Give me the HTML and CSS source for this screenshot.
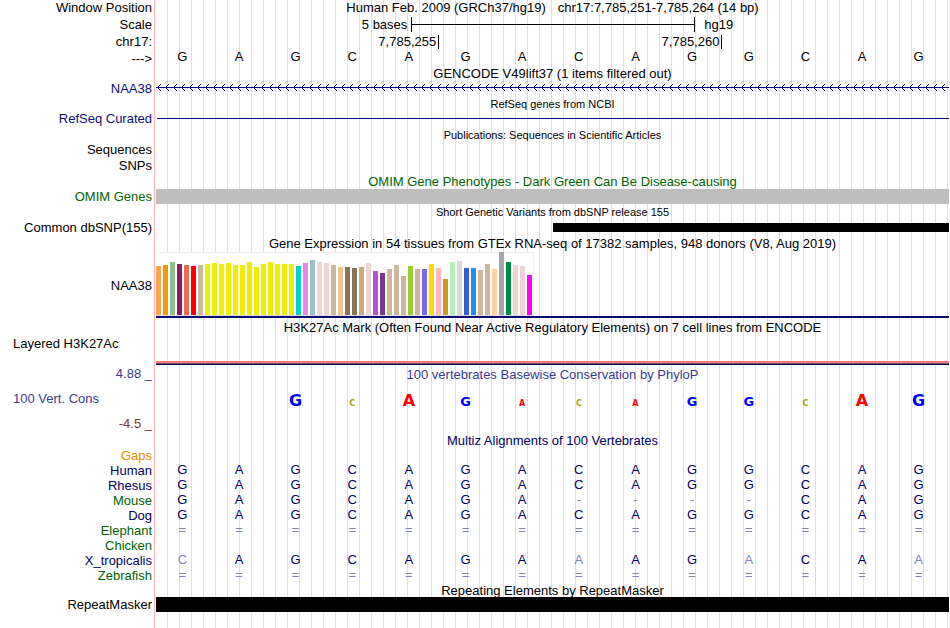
FILE: index.html
```html
<!DOCTYPE html>
<html lang="en">
<head>
    <meta charset="utf-8">
    <title>Human chr17:7,785,251-7,785,264 Genome Browser</title>
    <link rel="stylesheet" href="styles.css">
</head>
<body>
    <main class="browser">
        <div class="track">
            <div class="label">Window Position</div>
            <div class="title position"><span>Human Feb. 2009 (GRCh37/hg19)</span><span>chr17:7,785,251-7,785,264 (14 bp)</span></div>
        </div>
        <div class="track scale-track">
            <div class="label">Scale</div>
            <div class="scale">
                <span class="scale-size">5 bases</span>
                <span class="scale-bar"></span>
                <span class="scale-db">hg19</span>
            </div>
        </div>
        <div class="track">
            <div class="label">chr17:</div>
            <div class="ruler">
                <span class="tick">7,785,255</span>
                <span class="tick">7,785,260</span>
            </div>
        </div>
        <div class="track">
            <div class="label strand">---&gt;</div>
            <div class="bases" data-bases="GAGCAGACAGGCAG"></div>
        </div>

        <div class="title track-title">GENCODE V49lift37 (1 items filtered out)</div>
        <div class="track compact">
            <div class="label navy">NAA38</div>
            <svg class="gene" height="15">
                <defs>
                    <pattern id="arrows" width="8" height="15" patternUnits="userSpaceOnUse">
                        <path d="M4 3h1v1h-1zM3 4h1v1h-1zM2 5h1v1h-1zM1 6h1v1h-1zM2 7h1v1h-1zM3 8h1v1h-1zM4 9h1v1h-1z" fill="#0c0c78" />
                    </pattern>
                </defs>
                <rect width="100%" height="15" fill="url(#arrows)" />
                <rect y="6" width="100%" height="1" fill="#0c0c78" />
            </svg>
        </div>

        <div class="title track-title small">RefSeq genes from NCBI</div>
        <div class="track">
            <div class="label navy">RefSeq Curated</div>
            <div class="refseq"></div>
        </div>

        <div class="title track-title small">Publications: Sequences in Scientific Articles</div>
        <div class="track"><div class="label">Sequences</div></div>
        <div class="track"><div class="label">SNPs</div></div>

        <div class="title track-title green">OMIM Gene Phenotypes - Dark Green Can Be Disease-causing</div>
        <div class="track compact">
            <div class="label green">OMIM Genes</div>
            <div class="block omim"></div>
        </div>

        <div class="title track-title small variant-title">Short Genetic Variants from dbSNP release 155</div>
        <div class="track variant-track">
            <div class="label">Common dbSNP(155)</div>
            <div class="variant"></div>
        </div>

        <div class="title track-title tall">Gene Expression in 54 tissues from GTEx RNA-seq of 17382 samples, 948 donors (V8, Aug 2019)</div>
        <div class="track gtex-track">
            <div class="label">NAA38</div>
            <div class="gtex"><div class="bars" id="bars"></div></div>
        </div>

        <div class="title track-title roomy">H3K27Ac Mark (Often Found Near Active Regulatory Elements) on 7 cell lines from ENCODE</div>
        <div class="track histone-track">
            <div class="label left">Layered H3K27Ac</div>
            <div class="histone"></div>
        </div>

        <div class="track cons-track">
            <div class="cons-labels slate">
                <div class="label">4.88 _</div>
                <div class="label left">100 Vert. Cons</div>
                <div class="label maroon">-4.5 _</div>
            </div>
            <div class="cons">
                <div class="title slate">100 vertebrates Basewise Conservation by PhyloP</div>
                <div class="logo" id="logo"></div>
            </div>
        </div>

        <div class="title track-title dark">Multiz Alignments of 100 Vertebrates</div>
        <div class="track compact"><div class="label orange">Gaps</div></div>
        <div class="track compact">
            <div class="label dark">Human</div>
            <div class="bases dark" data-bases="GAGCAGACAGGCAG"></div>
        </div>
        <div class="track compact">
            <div class="label dark">Rhesus</div>
            <div class="bases dark" data-bases="GAGCAGACAGGCAG"></div>
        </div>
        <div class="track compact">
            <div class="label green">Mouse</div>
            <div class="bases dark" data-bases="GAGCAGA----CAG"></div>
        </div>
        <div class="track compact">
            <div class="label dark">Dog</div>
            <div class="bases dark" data-bases="GAGCAGACAGGCAG"></div>
        </div>
        <div class="track compact">
            <div class="label green">Elephant</div>
            <div class="bases dark" data-bases="=============="></div>
        </div>
        <div class="track compact"><div class="label green">Chicken</div></div>
        <div class="track compact">
            <div class="label dark">X_tropicalis</div>
            <!-- lower case marks a mismatch with human -->
            <div class="bases dark" data-bases="cAGCAGAaAGaCAa"></div>
        </div>
        <div class="track compact">
            <div class="label green">Zebrafish</div>
            <div class="bases dark" data-bases="=============="></div>
        </div>

        <div class="title track-title short">Repeating Elements by RepeatMasker</div>
        <div class="track compact">
            <div class="label">RepeatMasker</div>
            <div class="block repeat"></div>
        </div>
    </main>
    <script src="script.js"></script>
</body>
</html>
```
FILE: styles.css
```css
body {
    margin: 0;
    background: #ffffff;
    color: #000000;
    font-family: "Liberation Sans", Arial, Helvetica, sans-serif;
    font-size: 13px;
    line-height: 16px;
}
/* pink divider after the labels, then a guide line every 12px */
.browser {
    min-height: 100vh;
    margin-right: 1px;
    background-image:
        linear-gradient(#ffb4b4, #ffb4b4),
        repeating-linear-gradient(to right, transparent 0, transparent 11px, #dcdcf5 11px, #dcdcf5 12px);
    background-position: 154px 0, right top;
    background-size: 1px 100%, calc(100% - 156px) 100%;
    background-repeat: no-repeat;
}
.track {
    display: grid;
    grid-template-columns: 156px 1fr;
    min-height: 16px;
}
.compact {
    min-height: 15px;
    line-height: 15px;
}
.label {
    padding-right: 4px;
    text-align: right;
    white-space: nowrap;
}
.left {
    padding-left: 13px;
    text-align: left;
}
.title {
    text-align: center;
    white-space: nowrap;
}
.track-title {
    height: 15px;
    margin-left: 156px;
    line-height: 15px;
}
.small {
    font-size: 11px;
    line-height: 17px;
}
.tall, .variant-title {
    height: 16px;
}
.tall {
    line-height: 16px;
}
.roomy {
    line-height: 20px;
    height: 18px;
}
.short {
    height: 14px;
}
.navy {
    color: #0c0c78;
}
.dark {
    color: #000064;
}
.green {
    color: #006400;
}
.slate {
    color: #3c3c8c;
}
.maroon {
    color: #783232;
}
.orange {
    color: #e68c00;
}

/* position, scale and ruler */
.position {
    display: flex;
    justify-content: center;
    gap: 12px;
    line-height: 15px;
}
.scale-track {
    line-height: 18px;
}
.scale {
    display: grid;
    grid-template-columns: 32.2% 35.8% 1fr;
}
.scale-size {
    padding-right: 4px;
    text-align: right;
}
.scale-bar {
    height: 15px;
    margin-top: 1px;
    box-sizing: border-box;
    border: solid #000000;
    border-width: 0 1px;
    background: linear-gradient(#000000, #000000) center / 100% 1px no-repeat;
}
.scale-db {
    padding-left: 9px;
}
.ruler {
    display: grid;
    grid-template-columns: 5fr 5fr 4fr;
    align-items: center;
}
.tick {
    padding-right: 2px;
    border-right: 1px solid #000000;
    line-height: 14px;
    text-align: right;
}
.strand {
    height: 16px;
    line-height: 18px;
}
.bases, .logo {
    display: grid;
    grid-template-columns: repeat(14, 1fr);
    margin: 0 2px 0 -2px;
    text-align: center;
}
.bases {
    line-height: 14px;
}
.faded {
    color: #8282b4;
}

/* features */
.gene {
    width: 100%;
}
.refseq {
    height: 1px;
    margin: 7px 0 0 1px;
    background: #0c0c78;
}
.omim {
    background: #bebebe;
}
.repeat {
    background: #000000;
}
.variant {
    width: 50%;
    height: 9px;
    margin: 3px 0 0 auto;
    background: #000000;
}
.variant-track .label {
    line-height: 15px;
}

/* expression bars */
.gtex-track .label {
    height: 66px;
    line-height: 68px;
}
.gtex {
    border-bottom: 2px solid #0c0c78;
    line-height: 0;
}
.bars {
    display: inline-flex;
    align-items: flex-end;
    gap: 2px;
    height: 63px;
    padding-right: 1px;
    background: linear-gradient(#f0f0f0, #f0f0f0) top / 100% 1px no-repeat, #ffffff;
    border-right: 1px solid #f0f0f0;
    border-bottom: 1px solid #dcdcdc;
}
.bar {
    width: 5px;
}

/* histone mark */
.histone-track {
    min-height: 29px;
    line-height: 15px;
}
.histone {
    align-self: end;
    height: 2px;
    border-top: 2px solid #ff7878;
    background: linear-gradient(#785064 50%, #000050 50%);
}

/* conservation */
.cons-track {
    min-height: 68px;
}
.cons-labels {
    display: flex;
    flex-direction: column;
    justify-content: space-between;
    line-height: 18px;
}
.cons .title {
    line-height: 20px;
}
.logo {
    align-items: baseline;
    height: 34px;
    font-family: "DejaVu Sans", sans-serif;
    font-weight: bold;
    line-height: 32px;
}
.high {
    font-size: 16px;
}
.medium {
    font-size: 13px;
}
.low {
    font-size: 8px;
}
.base-a {
    color: #ff0000;
}
.base-c {
    color: #a0a000;
}
.base-g {
    color: #0000ff;
}
```
FILE: script.js
```javascript
document.querySelectorAll('.bases').forEach(function (row) {
    for (const base of row.dataset.bases) {
        const cell = document.createElement('span');
        cell.textContent = base.toUpperCase();
        if (/[a-z=-]/.test(base)) {
            cell.classList.add('faded');
        }
        row.appendChild(cell);
    }
});

// one [color, height] pair for each tissue
const tissues = [
    ['#ffa54f', 49], ['#ee9a00', 50], ['#8fbc8f', 53], ['#8b1c62', 51], ['#ee6a50', 50],
    ['#ff0000', 49], ['#cdb79e', 50], ['#eeee00', 51], ['#eeee00', 52], ['#eeee00', 51],
    ['#eeee00', 52], ['#eeee00', 50], ['#eeee00', 50], ['#eeee00', 53], ['#eeee00', 48],
    ['#eeee00', 51], ['#eeee00', 53], ['#eeee00', 51], ['#eeee00', 51], ['#eeee00', 51],
    ['#00cdcd', 49], ['#ee82ee', 52], ['#9ac0cd', 55], ['#eed5d2', 53], ['#eed5d2', 52],
    ['#cdb79e', 50], ['#eec591', 48], ['#8b7355', 48], ['#8b7355', 47], ['#cdaa7d', 48],
    ['#eed5d2', 52], ['#b452cd', 44], ['#7a378b', 42], ['#cdb79e', 46], ['#cdb79e', 50],
    ['#cdb79e', 39], ['#9acd32', 49], ['#cdb79e', 46], ['#7a67ee', 46], ['#ffd700', 51],
    ['#ffb6c1', 47], ['#cd9b1d', 36], ['#b4eeb4', 53], ['#d9d9d9', 54], ['#3a5fcd', 47],
    ['#1e90ff', 47], ['#cdb79e', 45], ['#cdb79e', 51], ['#ffd39b', 46], ['#a6a6a6', 63],
    ['#008b45', 53], ['#eed5d2', 50], ['#eed5d2', 49], ['#ff00ff', 40]
];
const bars = document.getElementById('bars');
tissues.forEach(function ([color, height]) {
    const bar = document.createElement('div');
    bar.className = 'bar';
    bar.style.height = height + 'px';
    bar.style.background = color;
    bars.appendChild(bar);
});

const scores = [
    ['', ''], ['', ''], ['G', 'high'], ['C', 'low'], ['A', 'high'], ['G', 'medium'], ['A', 'low'],
    ['C', 'low'], ['A', 'low'], ['G', 'medium'], ['G', 'medium'], ['C', 'low'], ['A', 'high'], ['G', 'high']
];
const logo = document.getElementById('logo');
scores.forEach(function ([base, level]) {
    const cell = document.createElement('span');
    cell.textContent = base;
    if (base) {
        cell.className = level + ' base-' + base.toLowerCase();
    }
    logo.appendChild(cell);
});
```
